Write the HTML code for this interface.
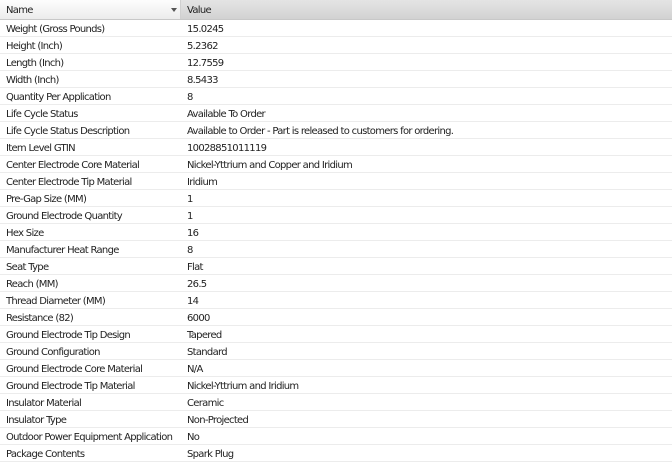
<!DOCTYPE html>
<html><head><style>
body{margin:0;width:672px;height:458px;overflow:hidden;background:#fff;font-family:"DejaVu Sans","Liberation Sans",sans-serif;font-size:10px;letter-spacing:-0.7px;color:#222}
.h{position:absolute;top:0;height:20px;left:0;width:672px;border-bottom:1px solid #c8c8c8;box-sizing:border-box}
.h .n{position:absolute;left:0;width:181px;height:19px;background:linear-gradient(#fdfdfd,#ececec);border-right:1px solid #d0d0d0;box-sizing:border-box}
.h .v{position:absolute;left:181px;right:0;height:19px;background:linear-gradient(#e4e4e4,#d2d2d2)}
.h span{position:absolute;top:5px}
.arr{position:absolute;left:171px;top:8px;width:0;height:0;border-left:3px solid transparent;border-right:3px solid transparent;border-top:4px solid #555}
.r{position:absolute;left:0;width:672px;height:17px;border-bottom:1px solid #ececec;box-sizing:border-box}
.r span{position:absolute;top:4px}
.a{left:6px}.b{left:187px}
</style></head><body>
<div class="h"><div class="n"><span class="a">Name</span><div class="arr"></div></div><div class="v"><span style="left:6px">Value</span></div></div>
<div id="rows"></div>
<script>
var d=[["Weight (Gross Pounds)","15.0245"],["Height (Inch)","5.2362"],["Length (Inch)","12.7559"],["Width (Inch)","8.5433"],["Quantity Per Application","8"],["Life Cycle Status","Available To Order"],["Life Cycle Status Description","Available to Order - Part is released to customers for ordering."],["Item Level GTIN","10028851011119"],["Center Electrode Core Material","Nickel-Yttrium and Copper and Iridium"],["Center Electrode Tip Material","Iridium"],["Pre-Gap Size (MM)","1"],["Ground Electrode Quantity","1"],["Hex Size","16"],["Manufacturer Heat Range","8"],["Seat Type","Flat"],["Reach (MM)","26.5"],["Thread Diameter (MM)","14"],["Resistance (82)","6000"],["Ground Electrode Tip Design","Tapered"],["Ground Configuration","Standard"],["Ground Electrode Core Material","N/A"],["Ground Electrode Tip Material","Nickel-Yttrium and Iridium"],["Insulator Material","Ceramic"],["Insulator Type","Non-Projected"],["Outdoor Power Equipment Application","No"],["Package Contents","Spark Plug"]];
var h="";d.forEach(function(x,i){h+='<div class="r" style="top:'+(20+i*17)+'px"><span class="a">'+x[0]+'</span><span class="b">'+x[1]+'</span></div>';});
document.getElementById("rows").innerHTML=h;
</script>
</body></html>
